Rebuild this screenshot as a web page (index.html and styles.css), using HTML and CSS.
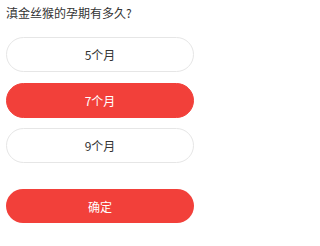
FILE: index.html
```html
<!DOCTYPE html>
<html lang="zh">
<head>
<meta charset="utf-8">
<link rel="stylesheet" href="styles.css">
</head>
<body>
<div class="quiz">
  <div class="question">滇金丝猴的孕期有多久?</div>
  <div class="options">
    <div class="option">5个月</div>
    <div class="option selected">7个月</div>
    <div class="option">9个月</div>
  </div>
  <div class="confirm">确定</div>
</div>
</body>
</html>
```
FILE: styles.css
```css
html, body {
  margin: 0;
  padding: 0;
  background: #ffffff;
}
body {
  font-family: "Noto Sans CJK SC", "Noto Sans", sans-serif;
  color: #333333;
}
.quiz {
  width: 188px;
  padding: 5px 0 0 6px;
  display: flex;
  flex-direction: column;
}
.question {
  font-size: 12px;
  line-height: 16px;
  color: #333333;
}
.options {
  margin-top: 16px;
  display: flex;
  flex-direction: column;
  gap: 10.5px;
}
.option {
  box-sizing: border-box;
  height: 35px;
  border: 1px solid #e6e6e6;
  border-radius: 18px;
  display: flex;
  align-items: center;
  justify-content: center;
  font-size: 12px;
  color: #333333;
  background: #ffffff;
}
.option.selected {
  background: #f2403a;
  border-color: #f2403a;
  color: #ffffff;
}
.confirm {
  margin-top: 26px;
  height: 34px;
  border-radius: 17px;
  background: #f2403a;
  color: #ffffff;
  font-size: 12px;
  display: flex;
  align-items: center;
  justify-content: center;
}
```
